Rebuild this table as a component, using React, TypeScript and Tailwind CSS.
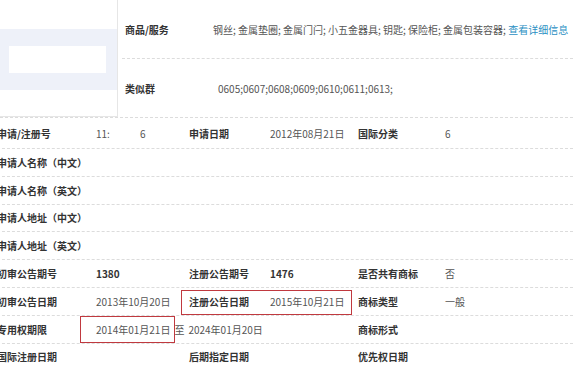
import React from "react";

type Cell = { text?: React.ReactNode; w?: string; bold?: boolean; label?: boolean };

const font = { fontFamily: '"Noto Sans CJK SC", "Noto Sans", sans-serif' };

function Row({ cells, tall }: { cells: Cell[]; tall?: boolean }) {
  return (
    <div
      className={`flex items-center border-b border-dashed border-[#dcdcdc] ${
        tall ? "h-[31px]" : "h-[27.8px]"
      }`}
    >
      {cells.map((c, i) => (
        <div
          key={i}
          className={`shrink-0 whitespace-nowrap ${c.w ?? "flex-1"} ${
            c.label || c.bold ? "font-bold text-[#333]" : "text-[#555]"
          }`}
        >
          {c.text}
        </div>
      ))}
    </div>
  );
}

const W1 = "w-[99px]";
const V1 = "w-[93px]";
const W2 = "w-[81px]";
const V2 = "w-[88px]";
const W3 = "w-[87px]";

export default function App() {
  return (
    <div className="relative h-[369px] w-[573px] overflow-hidden bg-white text-[10px]" style={font}>
      {/* top section */}
      <div className="flex h-[118px] border-b border-dashed border-[#dcdcdc]">
        <div className="h-[117px] w-[118px] shrink-0 border-r border-b border-[#e6e6e6]">
          <div className="mt-[29px] h-[61px] bg-[#eef1f9] pt-[17px] pl-[9px]">
            <div className="h-[27px] w-[97px] bg-white" />
          </div>
        </div>
        <div className="flex flex-1 flex-col pl-[4px]">
          <div className="flex h-[59px] items-center border-b border-dashed border-[#dcdcdc] pl-[3px]">
            <div className="w-[88px] shrink-0 font-bold text-[#333]">商品/服务</div>
            <div className="whitespace-nowrap text-[#555]">
              钢丝; 金属垫圈; 金属门闩; 小五金器具; 钥匙; 保险柜; 金属包装容器;{" "}
              <span className="text-[#2b8fc3]">查看详细信息</span>
            </div>
          </div>
          <div className="flex flex-1 items-center pl-[3px]">
            <div className="w-[93px] shrink-0 font-bold text-[#333]">类似群</div>
            <div className="whitespace-nowrap text-[#555]">0605;0607;0608;0609;0610;0611;0613;</div>
          </div>
        </div>
      </div>

      {/* rows */}
      <div className="ml-[-3px]">
        <Row
          tall
          cells={[
            { text: "申请/注册号", w: W1, label: true },
            {
              text: (
                <>
                  <span>11:</span>
                  <span className="ml-[30px]">6</span>
                </>
              ),
              w: V1,
            },
            { text: "申请日期", w: W2, label: true },
            { text: "2012年08月21日", w: V2 },
            { text: "国际分类", w: W3, label: true },
            { text: "6" },
          ]}
        />
        <Row cells={[{ text: "申请人名称（中文）", w: "w-[200px]", label: true }, {}]} />
        <Row cells={[{ text: "申请人名称（英文）", w: "w-[200px]", label: true }, {}]} />
        <Row cells={[{ text: "申请人地址（中文）", w: "w-[200px]", label: true }, {}]} />
        <Row cells={[{ text: "申请人地址（英文）", w: "w-[200px]", label: true }, {}]} />
        <Row
          cells={[
            { text: "初审公告期号", w: W1, label: true },
            { text: "1380", w: V1, bold: true },
            { text: "注册公告期号", w: W2, label: true },
            { text: "1476", w: V2, bold: true },
            { text: "是否共有商标", w: W3, label: true },
            { text: "否" },
          ]}
        />
        <Row
          cells={[
            { text: "初审公告日期", w: W1, label: true },
            { text: "2013年10月20日", w: V1 },
            { text: "注册公告日期", w: W2, label: true },
            { text: "2015年10月21日", w: V2 },
            { text: "商标类型", w: W3, label: true },
            { text: "一般" },
          ]}
        />
        <Row
          cells={[
            { text: "专用权期限", w: W1, label: true },
            {
              text: (
                <>
                  2014年01月21日<span className="mx-[4px]">至</span>2024年01月20日
                </>
              ),
              w: "w-[262px]",
            },
            { text: "商标形式", w: W3, label: true },
            {},
          ]}
        />
        <Row
          cells={[
            { text: "国际注册日期", w: W1, label: true },
            { text: "", w: V1 },
            { text: "后期指定日期", w: W2, label: true },
            { text: "", w: V2 },
            { text: "优先权日期", w: W3, label: true },
            {},
          ]}
        />
      </div>

      {/* red highlight boxes */}
      <div className="pointer-events-none absolute left-[181px] top-[290px] h-[25px] w-[171px] border border-[#c0393f]" />
      <div className="pointer-events-none absolute left-[80px] top-[316px] h-[27px] w-[95px] border border-[#c0393f]" />
    </div>
  );
}
